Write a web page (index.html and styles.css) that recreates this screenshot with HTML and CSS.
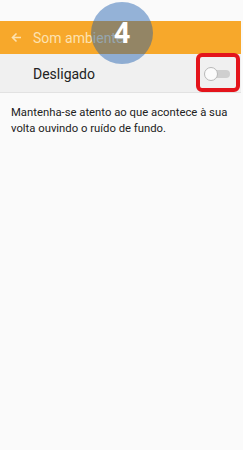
FILE: index.html
```html
<!DOCTYPE html>
<html lang="pt">
  <head>
    <meta charset="UTF-8" />
    <meta name="viewport" content="width=device-width, initial-scale=1.0" />
    <title>Som ambiente</title>
    <link rel="stylesheet" href="styles.css">
  </head>
  <body>
    <div class="screen">
      <div class="status"></div>

      <!-- App bar -->
      <header class="appbar">
        <svg class="back" width="11" height="11" viewBox="0 0 11 11">
          <path d="M10 5.5H1.5M5.5 1.5L1.5 5.5L5.5 9.5" fill="none" stroke="#fde2b0" stroke-width="1.6" />
        </svg>
        <span class="title">Som ambiente</span>
      </header>

      <!-- Switch row -->
      <div class="switch-row">
        <span class="switch-label">Desligado</span>
        <div class="toggle">
          <div class="track"></div>
          <div class="knob"></div>
        </div>
        <div class="highlight"></div>
      </div>

      <p class="description">
        Mantenha-se atento ao que acontece à sua volta ouvindo o ruído de fundo.
      </p>

      <div class="step-badge">4</div>
    </div>
  </body>
</html>
```

FILE: styles.css
```css
* {
  box-sizing: border-box;
  margin: 0;
  padding: 0;
}

html,
body {
  background: #fafafa;
  font-family: Roboto, "Noto Sans", sans-serif;
  height: 100%;
  overflow: hidden;
}

.screen {
  position: relative;
  width: 241px;
  min-height: 450px;
}

.status {
  height: 21px;
}

/* App bar */
.appbar {
  display: flex;
  align-items: center;
  height: 33px;
  background: #f7a82b;
  padding-left: 11px;
}

.back {
  display: block;
  margin-right: 11px;
}

.title {
  color: #fde2b0;
  font-size: 14px;
}

/* Switch row */
.switch-row {
  position: relative;
  display: flex;
  align-items: center;
  justify-content: space-between;
  height: 39px;
  background: #f0f0f0;
  border-bottom: 1px solid #e2e2e2;
  padding: 2px 11px 0 33px;
}

.switch-label {
  font-size: 14px;
  color: #222;
}

.toggle {
  position: relative;
  width: 26px;
  height: 14px;
}

.track {
  position: absolute;
  left: 4px;
  right: 0;
  top: 3px;
  height: 8px;
  border-radius: 4px;
  background: #cfcfcf;
}

.knob {
  position: absolute;
  left: 0;
  top: 0;
  width: 14px;
  height: 14px;
  border-radius: 50%;
  background: #fbfbfb;
  border: 1px solid #b8b8b8;
}

/* red annotation frame */
.highlight {
  position: absolute;
  left: 196px;
  top: -1px;
  width: 44px;
  height: 39px;
  border: 4px solid #e4141b;
  border-radius: 6px;
}

.description {
  padding: 12px 8px 12px 11px;
  font-size: 11.3px;
  line-height: 16px;
  color: #222;
}

/* numbered step marker */
.step-badge {
  position: absolute;
  left: 91px;
  top: 2px;
  width: 62px;
  height: 62px;
  border-radius: 50%;
  background: rgba(24, 90, 172, 0.45);
  color: #fff;
  font-size: 29px;
  font-weight: bold;
  display: flex;
  align-items: center;
  justify-content: center;
}
```
